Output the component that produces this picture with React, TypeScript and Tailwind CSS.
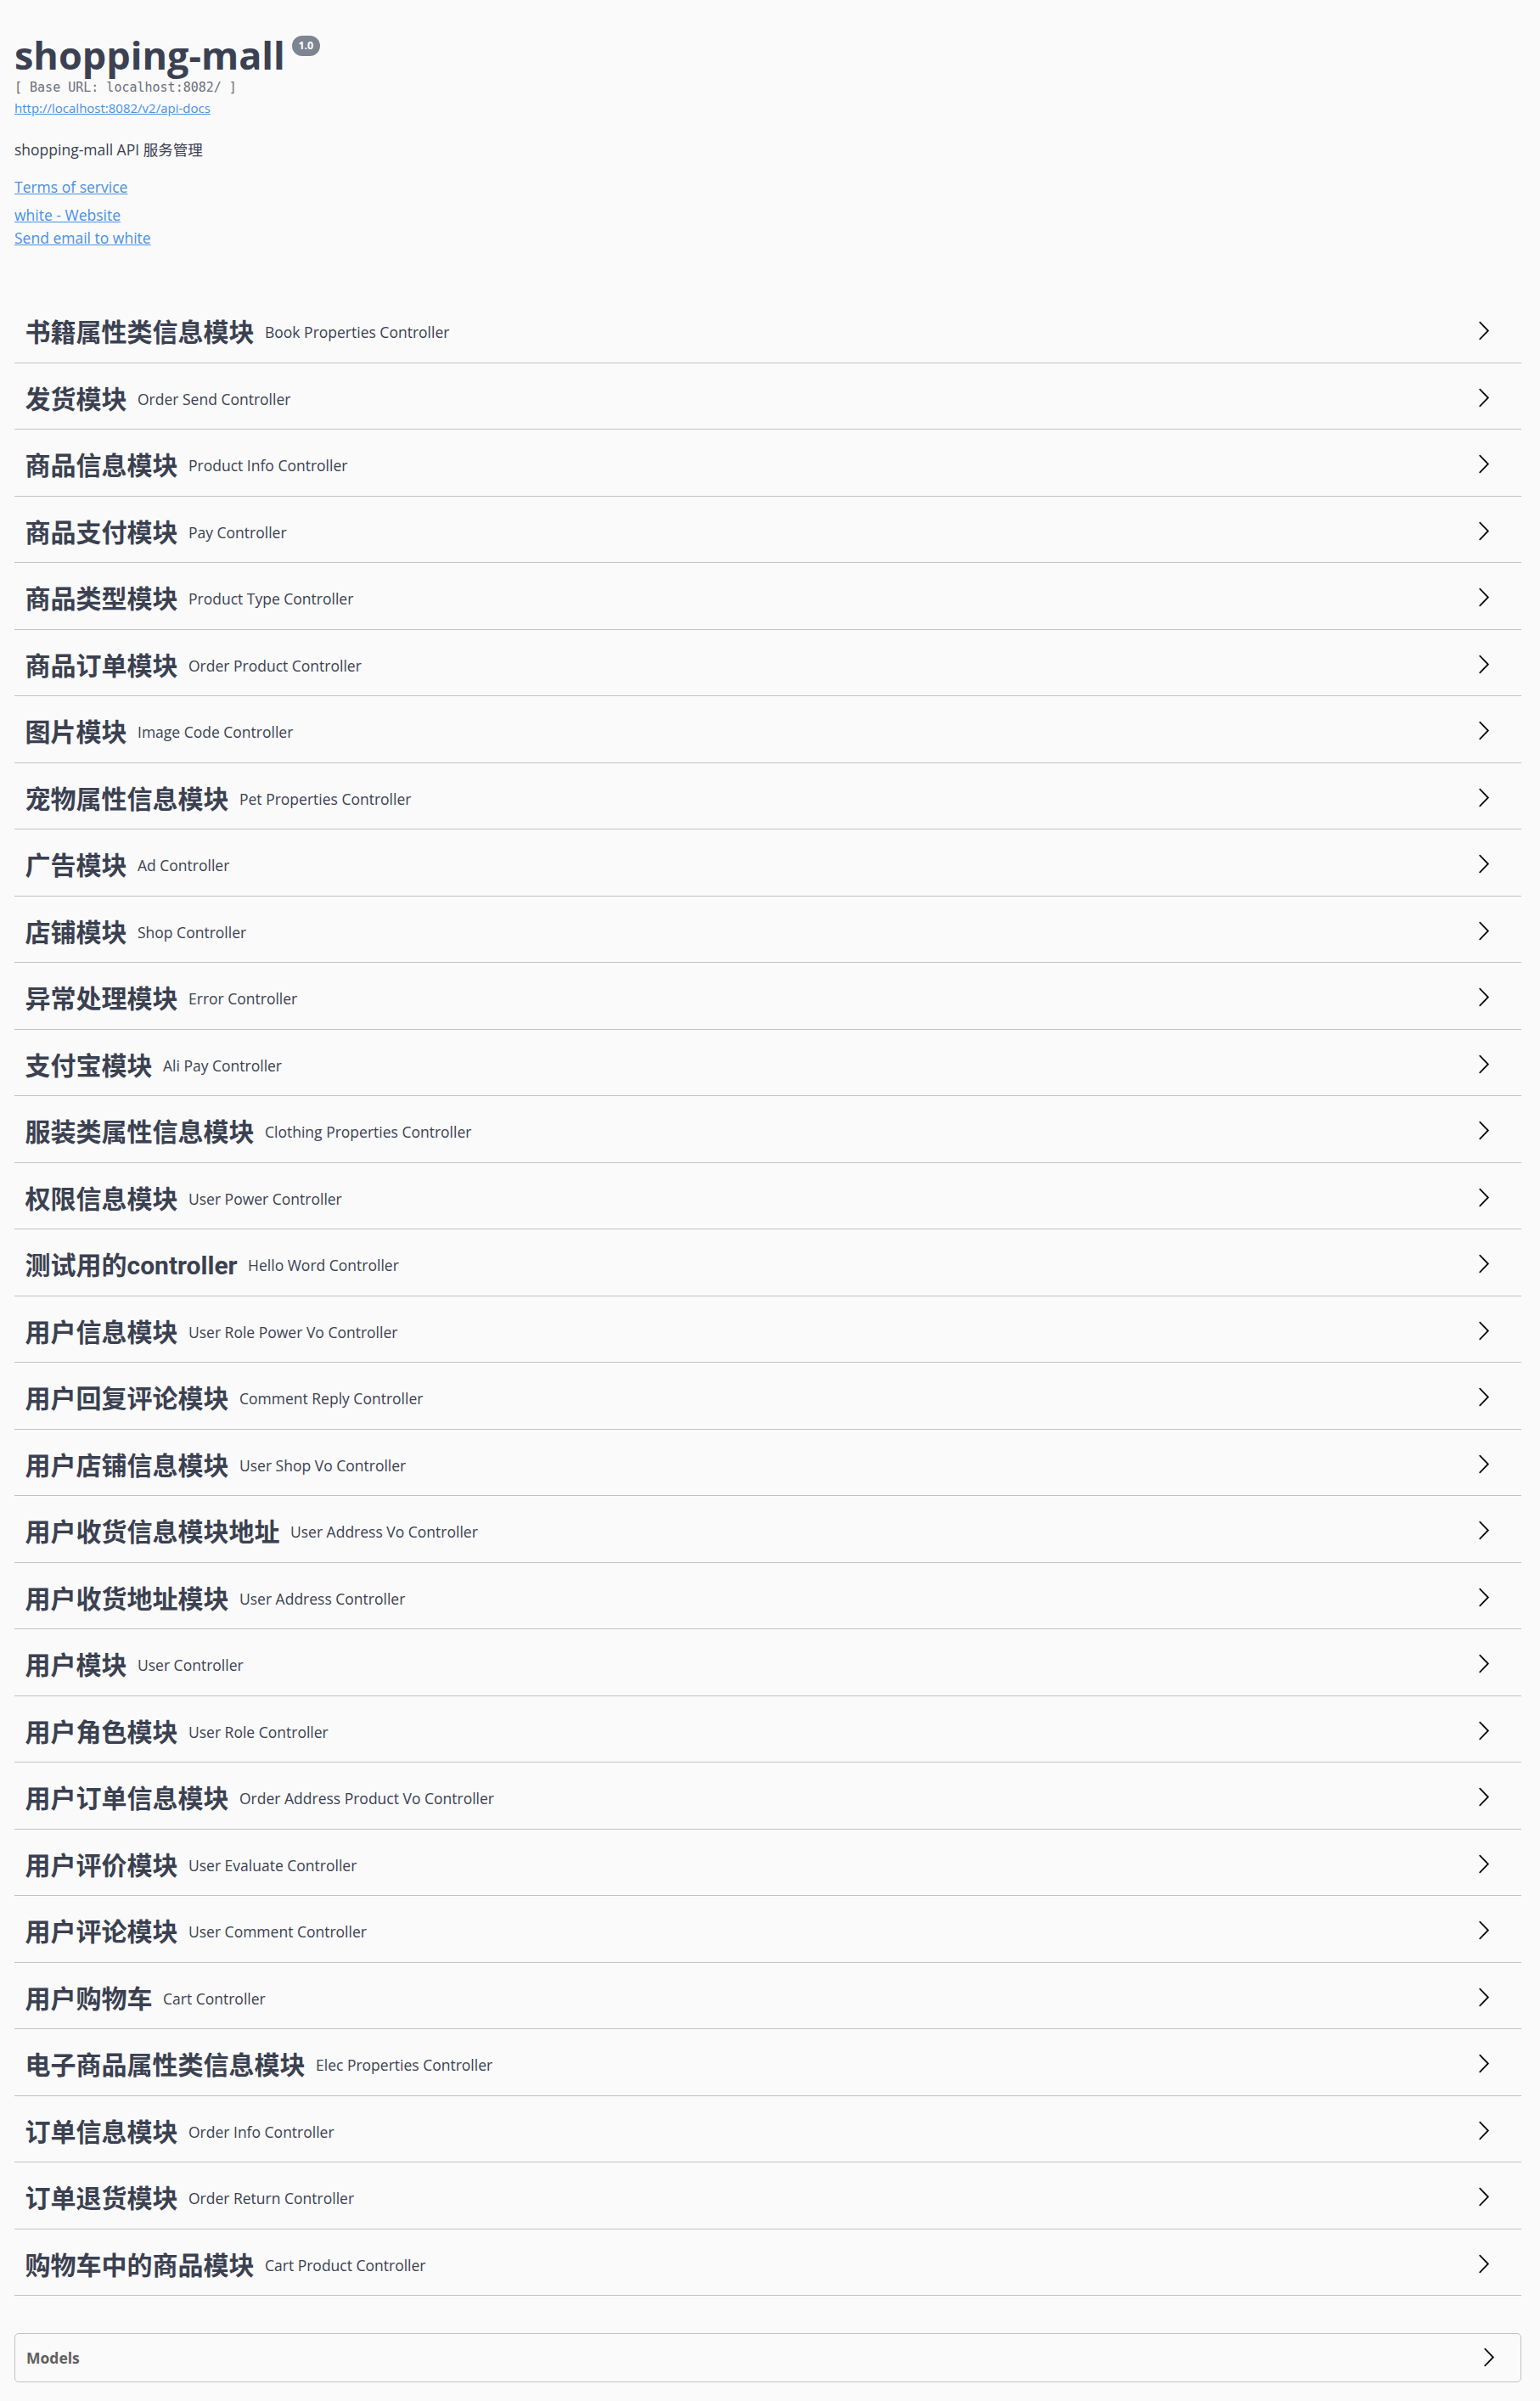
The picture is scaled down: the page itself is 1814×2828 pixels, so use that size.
import React from "react";

const rows: [string, string][] = [
  ["书籍属性类信息模块", "Book Properties Controller"],
  ["发货模块", "Order Send Controller"],
  ["商品信息模块", "Product Info Controller"],
  ["商品支付模块", "Pay Controller"],
  ["商品类型模块", "Product Type Controller"],
  ["商品订单模块", "Order Product Controller"],
  ["图片模块", "Image Code Controller"],
  ["宠物属性信息模块", "Pet Properties Controller"],
  ["广告模块", "Ad Controller"],
  ["店铺模块", "Shop Controller"],
  ["异常处理模块", "Error Controller"],
  ["支付宝模块", "Ali Pay Controller"],
  ["服装类属性信息模块", "Clothing Properties Controller"],
  ["权限信息模块", "User Power Controller"],
  ["测试用的controller", "Hello Word Controller"],
  ["用户信息模块", "User Role Power Vo Controller"],
  ["用户回复评论模块", "Comment Reply Controller"],
  ["用户店铺信息模块", "User Shop Vo Controller"],
  ["用户收货信息模块地址", "User Address Vo Controller"],
  ["用户收货地址模块", "User Address Controller"],
  ["用户模块", "User Controller"],
  ["用户角色模块", "User Role Controller"],
  ["用户订单信息模块", "Order Address Product Vo Controller"],
  ["用户评价模块", "User Evaluate Controller"],
  ["用户评论模块", "User Comment Controller"],
  ["用户购物车", "Cart Controller"],
  ["电子商品属性类信息模块", "Elec Properties Controller"],
  ["订单信息模块", "Order Info Controller"],
  ["订单退货模块", "Order Return Controller"],
  ["购物车中的商品模块", "Cart Product Controller"],
];

function Arrow() {
  return (
    <svg width="25" height="25" viewBox="0 0 20 20" className="shrink-0">
      <path
        fill="#000"
        d="M13.25 10L6.109 2.58a.697.697 0 0 1 0-.979.68.68 0 0 1 .969 0l7.83 7.908a.697.697 0 0 1 0 .979l-7.83 7.908a.68.68 0 0 1-.969 0 .697.697 0 0 1 0-.979L13.25 10z"
      />
    </svg>
  );
}

export default function App() {
  return (
    <div
      className="min-h-[2828px] bg-[#fafafa] text-[#3b4151] pl-[17px] pr-[22px]"
      style={{ fontFamily: '"Open Sans", "Noto Sans CJK SC", sans-serif' }}
    >
      {/* Info header */}
      <div className="pt-[42px]">
        <div className="flex items-start">
          <h2 className="text-[45px] leading-[45px] font-bold text-[#3b4151]">shopping-mall</h2>
          <span className="ml-[8px] flex h-[23.5px] w-[33px] items-center justify-center rounded-full bg-[#7d8492] text-[12.5px] font-bold leading-none text-white">
            1.0
          </span>
        </div>
        <div
          className="mt-[9.3px] text-[15px] leading-[15px] text-[#6b6f78]"
          style={{ fontFamily: '"DejaVu Sans Mono", "Liberation Mono", monospace' }}
        >
          [ Base URL: localhost:8082/ ]
        </div>
        <div className="mt-[6.9px] text-[15px] leading-[18px]">
          <a className="text-[#4990e2] underline" href="#">
            http://localhost:8082/v2/api-docs
          </a>
        </div>
        <div className="mt-[28px] text-[17.5px] leading-[24px]">shopping-mall API 服务管理</div>
        <div className="mt-[20px] text-[17.5px] leading-[24px]">
          <a className="text-[#4990e2] underline" href="#">
            Terms of service
          </a>
        </div>
        <div className="mt-[8.7px] text-[17.5px] leading-[24px]">
          <a className="text-[#4990e2] underline" href="#">
            white - Website
          </a>
        </div>
        <div className="mt-[3px] text-[17.5px] leading-[24px]">
          <a className="text-[#4990e2] underline" href="#">
            Send email to white
          </a>
        </div>
      </div>

      {/* Tag rows */}
      <div className="mt-[63.85px] flex flex-col">
        {rows.map(([zh, en]) => (
          <div key={zh} className="mb-[6.25px]">
            <div className="flex h-[72.25px] items-center border-b border-[rgba(59,65,81,0.3)] pl-[12.5px] pr-[32px]">
              <span
                className="pt-[2px] text-[30px] font-bold leading-[36px] text-[#3b4151]"
                style={{ fontFamily: 'Roboto, "Noto Sans CJK SC", sans-serif' }}
              >
                {zh}
              </span>
              <span className="px-[12.5px] text-[17.5px] font-normal leading-[24px] text-[#3b4151]">{en}</span>
              <div className="flex-1" />
              <div className="-mt-[3px]">
                <Arrow />
              </div>
            </div>
          </div>
        ))}
      </div>

      {/* Models */}
      <div className="mt-[37px] flex h-[58.5px] items-center rounded-[5px] border border-[rgba(59,65,81,0.3)] pl-[13px] pr-[25px]">
        <span className="text-[17.5px] font-bold text-[#606060]">Models</span>
        <div className="flex-1" />
        <Arrow />
      </div>
    </div>
  );
}
